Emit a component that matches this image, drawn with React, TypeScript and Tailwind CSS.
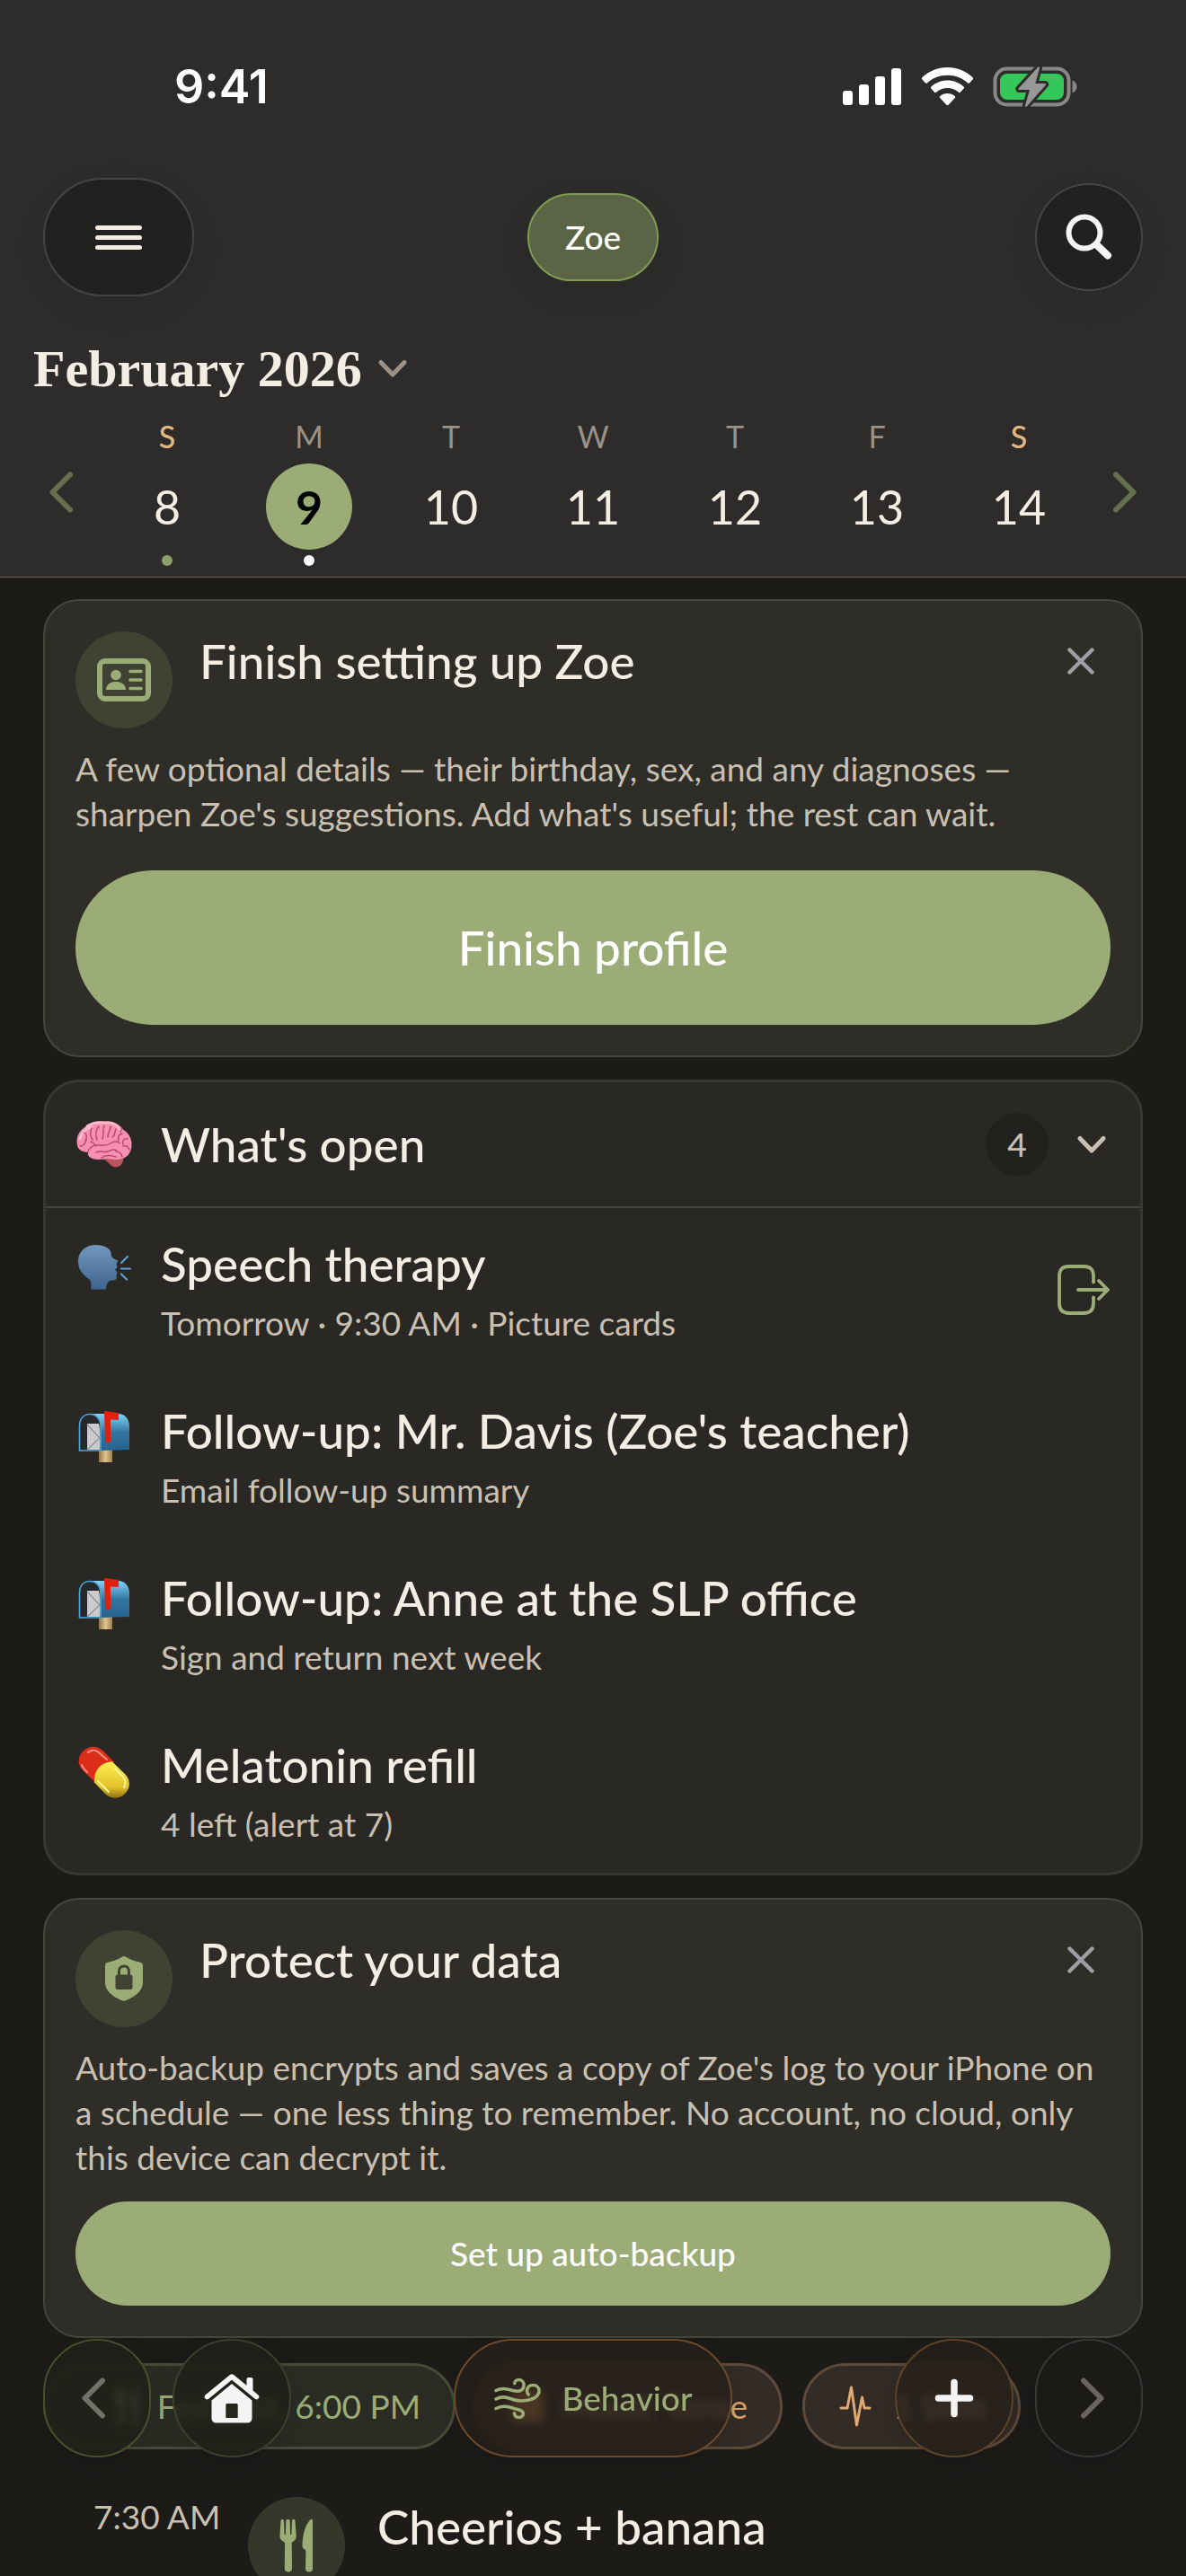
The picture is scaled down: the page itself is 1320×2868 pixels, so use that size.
import type { ReactNode } from "react";

const weekDays = [
  { letter: "S", day: 8, weekend: true, dot: true },
  { letter: "M", day: 9, selected: true, dot: true },
  { letter: "T", day: 10 },
  { letter: "W", day: 11 },
  { letter: "T", day: 12 },
  { letter: "F", day: 13 },
  { letter: "S", day: 14, weekend: true },
];

const openItems = [
  {
    title: "Speech therapy",
    detail: "Tomorrow · 9:30 AM · Picture cards",
    icon: <SpeakingHead />,
    action: true,
  },
  {
    title: "Follow-up: Mr. Davis (Zoe's teacher)",
    detail: "Email follow-up summary",
    icon: <Mailbox />,
  },
  {
    title: "Follow-up: Anne at the SLP office",
    detail: "Sign and return next week",
    icon: <Mailbox />,
  },
  {
    title: "Melatonin refill",
    detail: "4 left (alert at 7)",
    icon: <Pill />,
  },
];

/* Icons */

function Chevron({ dir, className }: { dir: "left" | "right"; className: string }) {
  return (
    <svg viewBox="0 0 28 46" fill="none" className={className} aria-hidden="true">
      <path
        d={dir === "left" ? "M24 3.5 4.5 23 24 42.5" : "M4 3.5 23.500 23 4 42.5"}
        stroke="currentColor"
        strokeWidth="6"
        strokeLinecap="round"
        strokeLinejoin="round"
      />
    </svg>
  );
}

function ChevronDown({ className }: { className: string }) {
  return (
    <svg viewBox="0 0 32 20" fill="none" className={className} aria-hidden="true">
      <path
        d="M3 3.500 16 17 29 3.500"
        stroke="currentColor"
        strokeWidth="5"
        strokeLinecap="round"
        strokeLinejoin="round"
      />
    </svg>
  );
}

function CloseIcon() {
  return (
    <svg viewBox="0 0 30 30" fill="none" className="size-[30px]" aria-hidden="true">
      <path d="M2.500 2.500 27.500 27.500M27.500 2.500 2.500 27.500" stroke="currentColor" strokeWidth="4.400" strokeLinecap="round" />
    </svg>
  );
}

function StatusIcons() {
  return (
    <svg viewBox="0 0 262 48" fill="none" className="h-12 w-[262px]" aria-hidden="true">
      <g fill="#fff">
        <rect x="0" y="28" width="11" height="16" rx="3" />
        <rect x="18" y="21" width="11" height="23" rx="3" />
        <rect x="36" y="12" width="11" height="32" rx="3" />
        <rect x="54" y="3" width="11" height="41" rx="3" />
        <path d="M116.500 2C105.500 2 95.600 6.300 88.300 13.300c-.6.600-.6 1.400-.1 2l3.600 4c.6.600 1.400.6 2 .1 6-5.500 14-8.700 22.700-8.700s16.700 3.200 22.700 8.700c.6.500 1.400.5 2-.1l3.600-4c.5-.6.500-1.400-.1-2C137.400 6.300 127.500 2 116.500 2z" />
        <path d="M116.500 16.500c-7 0-13.300 2.700-18.100 7-.6.600-.6 1.400-.1 2l3.800 4.200c.5.600 1.300.600 1.900.1 3.400-2.900 7.700-4.700 12.500-4.700s9.100 1.800 12.500 4.700c.6.500 1.400.5 1.900-.1l3.800-4.200c.5-.6.500-1.400-.1-2-4.800-4.300-11.100-7-18.100-7z" />
        <path d="M116.500 31c-3.100 0-6 1.100-8.200 3-.7.600-.7 1.400-.1 2l7 7.600c.7.700 1.900.7 2.600 0l7-7.600c.6-.6.600-1.400-.1-2-2.200-1.900-5.100-3-8.200-3z" />
      </g>
      <rect x="169.500" y="3.500" width="82" height="40" rx="13" stroke="#888887" strokeWidth="4" />
      <path d="M255.500 16.500c3 1 5 4 5 7s-2 6-5 7z" fill="#888887" />
      <rect x="175" y="9" width="71" height="29" rx="8" fill="#34c759" />
      <path
        d="M217 2 195.500 25.500c-.5.600-.1 1.500.7 1.500h11.800L203 44.500c-.3 1.200 1 1.900 1.800 1L226 21.500c.6-.6.100-1.500-.7-1.500h-11l4.700-17c.3-1.300-1.100-2-2-1z"
        fill="#979796"
        stroke="#2d2c2b"
        strokeWidth="6"
        paintOrder="stroke"
      />
    </svg>
  );
}

function SearchIcon() {
  return (
    <svg viewBox="0 0 54 54" fill="none" className="size-[54px]" aria-hidden="true">
      <circle cx="22" cy="22" r="17.500" stroke="#f4f4f4" strokeWidth="6" />
      <path d="m36 36 12 11.500" stroke="#f4f4f4" strokeWidth="8" strokeLinecap="round" />
    </svg>
  );
}

function IdCardIcon() {
  return (
    <svg viewBox="0 0 60 48" fill="none" className="h-12 w-[60px]" aria-hidden="true">
      <rect x="3" y="3" width="54" height="42" rx="6" stroke="#9cac77" strokeWidth="6" />
      <circle cx="21" cy="18.500" r="5.800" fill="#9cac77" />
      <path d="M10 35c0-5.500 4.500-9 11-9s11 3.500 11 9z" fill="#9cac77" />
      <path d="M37 14.500h12M37 24h12M37 33.500h12" stroke="#9cac77" strokeWidth="3.600" strokeLinecap="round" />
    </svg>
  );
}

function ShieldLockIcon() {
  return (
    <svg viewBox="0 0 42 52" fill="none" className="h-[52px] w-[42px]" aria-hidden="true">
      <path
        d="M21 1c1.500 0 3 1.300 5 2.300 4 2 8.500 3.500 13 4.500 1.800.4 3 1.700 3 3.500v19C42 41 30 48 21 51 12 48 0 41 0 30.300v-19c0-1.800 1.200-3.100 3-3.500 4.500-1 9-2.500 13-4.500C18 2.300 19.500 1 21 1z"
        fill="#9cac77"
      />
      <rect x="11.500" y="21.500" width="19" height="16.500" rx="2.500" fill="#404333" />
      <path d="M15.500 22v-4.500c0-3.300 2.300-5.500 5.500-5.500s5.500 2.200 5.500 5.500V22" stroke="#404333" strokeWidth="3" />
    </svg>
  );
}

function ExitIcon() {
  return (
    <svg viewBox="0 0 58 56" fill="none" className="h-14 w-[58px]" aria-hidden="true">
      <path
        d="M40 19.500V13C40 5.500 36.500 2 29 2H13C5.500 2 2 5.500 2 13v30c0 7.500 3.500 11 11 11h16c7.500 0 11-3.500 11-11v-6.500M23 28h32M46 18l10 10-10 10"
        stroke="#9cac77"
        strokeWidth="3.800"
        strokeLinecap="round"
        strokeLinejoin="round"
      />
    </svg>
  );
}

function ForkKnife({ className }: { className: string }) {
  return (
    <svg viewBox="0 0 38 60" fill="currentColor" className={className} aria-hidden="true">
      <path d="M1.500 2.200c.1-1.600 3.300-1.600 3.400 0l.7 15.600h1.300L7.300 2.200c.1-1.600 4.300-1.600 4.400 0l.4 15.600h1.300l.7-15.600c.1-1.600 3.300-1.600 3.400 0L18.700 19c.3 4-1.400 5.800-5 7.700L14 56c0 4.500-8.200 4.500-8.200 0l.3-29.300C2.500 24.800.3 23 .5 19z" />
      <path d="M37 2.500V56c0 4.500-8 4.500-8 0l.4-20c0-1.500-3.900-2.500-3.900-5 0-12 3-23.500 8.700-29.500C35.600.2 37 .8 37 2.500z" />
    </svg>
  );
}

function PulseIcon() {
  return (
    <svg viewBox="0 0 36 46" fill="none" className="h-[46px] w-9 shrink-0" aria-hidden="true">
      <path
        d="M2 25h7l4.500-23L19.500 44 25.500 13l2.500 12h6"
        stroke="currentColor"
        strokeWidth="3"
        strokeLinecap="round"
        strokeLinejoin="round"
      />
    </svg>
  );
}

function WindIcon() {
  return (
    <svg viewBox="0 0 52 46" fill="none" className="h-[46px] w-[52px] shrink-0" aria-hidden="true">
      <g stroke="#9cac77" strokeWidth="3.600" strokeLinecap="round">
        <path d="M2 14.500c8-4 14-1 20 .3 7 1.500 11-1 11-6.300 0-3.500-2.500-6-5.500-6-2.600 0-4.700 1.700-4.700 4.200" />
        <path d="M2 24c9-5 15 0 23 1.500 6 1 11.500.500 17-1.500 5-1.900 8-5.500 8-9 0-4-2.800-6.500-6.700-6.500-4 0-6.800 2.700-6.800 6.500 0 1.600.6 3 1.700 4" />
        <path d="M2 34.500c8-4 14-2 21 .3 5.500 1.500 9 2 9.300 5 .2 3-2 4.700-4.800 4.700-3 0-5-2-5-4.700" />
      </g>
    </svg>
  );
}

function HomeIcon() {
  return (
    <svg viewBox="0 0 62 56" className="h-14 w-[62px]" aria-hidden="true">
      <path d="M3.500 26.500 31 4l27.500 22.500" fill="none" stroke="#f4f4f4" strokeWidth="5.500" strokeLinecap="round" strokeLinejoin="round" />
      <path d="M47.500 7c0-1.200.8-2 2-2h3c1.200 0 2 .8 2 2v15l-7-5.500z" fill="#f4f4f4" />
      <path
        d="M31 12 8.500 30.500V50c0 3.500 2 5.500 5.500 5.500h34c3.500 0 5.500-2 5.500-5.500V30.500zM26 34h10c1 0 1.700.7 1.700 1.700V50H24.300V35.700c0-1 .7-1.700 1.700-1.700z"
        fill="#f4f4f4"
        fillRule="evenodd"
      />
    </svg>
  );
}

function Brain() {
  return (
    <svg viewBox="0 0 62 52" fill="none" className="h-[52px] w-[62px] shrink-0" aria-hidden="true">
      <path d="M26 42c6 0 9 4 12 7 4 4 11 2.500 13-2 1.500-3.300 1.500-6 1-9z" fill="#b8545f" />
      <path
        d="M1 27C-1 17 4 10 11 6 17 1 26-.5 34 1c8-1 15 4 18.500 9C58 13 62 20 61.500 27c0 7-4 13-10 15-7 2.500-14-.5-20 0-6 1.500-13 1.500-17-2-2-2-2-4-1-5-6 0-12-3-12.500-8z"
        fill="#f78fb0"
      />
      <path
        d="M4 20c2-8 7-12 13-13M12 6c5-4 12-5 20-4 8-1 14 3 17 8"
        stroke="#ffb9cd"
        strokeWidth="3"
        strokeLinecap="round"
      />
      <path
        d="M13 34c2-6 8-8 14-7s10-1 13-3 7-1 8 1M4 28c4 0 6-3 7-7M9 13c3 2 3 6 1 9M17 8c-2 5-2 9 1 13M25 6c-4 5-4 9-2 15M31 5c-2 6 0 9-2 15M38 6c0 5-3 6-3 12M44 9c-2 3 0 7-4 9M51 14c-4 1-5 4-4 8M57 20c-4-1-6 2-5 6M52 28c4-1 6 1 7 4M22 35c5-3 8 1 13-1s6-3 10-1M28 41c4-3 10-3 16-1M44 34c4 0 6 2 7 6M16 23c3 1 4 2 6 5M50 8c1 2 0 3-1 4"
        stroke="#b84a70"
        strokeWidth="1.500"
        strokeLinecap="round"
      />
    </svg>
  );
}

function SpeakingHead() {
  return (
    <svg viewBox="0 0 60 52" fill="none" className="h-[52px] w-[60px] shrink-0" aria-hidden="true">
      <defs>
        <linearGradient id="head" x1="0" y1="0" x2="0" y2="1">
          <stop offset="0" stopColor="#7296bc" />
          <stop offset="1" stopColor="#3f648f" />
        </linearGradient>
      </defs>
      <path
        d="M21 1C9 1 1 8.500 1 19c0 8 3 12.500 8 17 5 4 8 5 6 14.500h17c.5-7 2.500-10 7-10 4 0 5.500-1.500 4.500-5.500l1-4-2.500-2 2.500-3-1-3.500 2-4c-5.500-2-8-3-8-9C37 5.500 30.500 1 21 1z"
        fill="url(#head)"
      />
      <path d="m49 21 7-7M49 27.500h10M49 33.500l6 6" stroke="#5f9dd0" strokeWidth="2.200" strokeLinecap="round" />
    </svg>
  );
}

function Mailbox() {
  return (
    <svg viewBox="0 0 60 58" fill="none" className="h-[58px] w-[60px] shrink-0" aria-hidden="true">
      <defs>
        <linearGradient id="box" x1="0" y1="0" x2="0" y2="1">
          <stop offset="0" stopColor="#7fd4fb" />
          <stop offset=".5" stopColor="#34759f" />
          <stop offset="1" stopColor="#25638d" />
        </linearGradient>
        <linearGradient id="post" x1="0" y1="0" x2="1" y2="0">
          <stop offset="0" stopColor="#8f7544" />
          <stop offset=".5" stopColor="#e0c48f" />
          <stop offset="1" stopColor="#9c814e" />
        </linearGradient>
      </defs>
      <rect x="24" y="42" width="15" height="15" fill="url(#post)" />
      <path d="M14 3h31c8 0 13 6 13 14v26l-31 1z" fill="url(#box)" />
      <path d="M2.500 44V17C2.500 8.500 7 3.500 14 3.500S26 9 26 17v27z" fill="#26282a" stroke="#4ea4d6" strokeWidth="1.600" />
      <path d="M11 14h13c1.500 4 1.500 24 1 29H11z" fill="#c9cbcd" />
      <path d="m11 15 14 15-14 13" stroke="#909396" strokeWidth="1.300" />
      <path d="M30 1.500c0-.8.500-1.500 1.500-1.500L46 2v8l-9-.5V32c0 4.500-6 4.500-6 0z" fill="#e3200c" />
    </svg>
  );
}

function Pill() {
  return (
    <svg viewBox="0 0 60 60" fill="none" className="size-[60px] shrink-0" aria-hidden="true">
      <defs>
        <linearGradient id="yellow" x1="0" y1="0" x2="0" y2="1">
          <stop offset="0" stopColor="#fdf04f" />
          <stop offset=".7" stopColor="#e2c22b" />
          <stop offset="1" stopColor="#8f6f10" />
        </linearGradient>
      </defs>
      <path d="M6.500 6.500c6.500-6.500 16-6.500 22.500 0l12 12L19.500 41l-13-12.500c-6.500-6.500-6.500-15.500 0-22z" fill="#dc2d18" />
      <path d="M39 18.500 53 32c6.500 6.500 6.500 15.500 0 22s-15.500 6.500-22 0L19 41.500C18 29 26 18.500 39 18.500z" fill="url(#yellow)" />
      <path d="M12 8c4-3 9-3 13 1l8 7M5 22c1 3 3 5 6 8" stroke="#f98d7c" strokeWidth="2.200" strokeLinecap="round" />
      <path d="M23 40l12 12M42 26l9 9c3 4 3 8 1 12" stroke="#fff7a0" strokeWidth="1.800" strokeLinecap="round" />
    </svg>
  );
}

/* Pieces */

function SetupCard({
  icon,
  title,
  children,
  button,
}: {
  icon: ReactNode;
  title: string;
  children: ReactNode;
  button: ReactNode;
}) {
  return (
    <section className="rounded-[40px] border-2 border-[#44473a] bg-[#2e2d28] p-[34px]">
      <div className="flex items-start gap-[30px]">
        <div className="flex size-[108px] shrink-0 items-center justify-center rounded-full bg-[#404333]">
          {icon}
        </div>
        <h2 className="flex-1 text-[53px] leading-[66px] font-medium">{title}</h2>
        <button aria-label={"Dismiss " + title} className="flex size-[66px] items-center justify-center text-[#9f9ea4]">
          <CloseIcon />
        </button>
      </div>
      <p className="mt-5 text-[37px] leading-[50px] text-[#c9c0b1]">{children}</p>
      {button}
    </section>
  );
}

function Glass({ label, className, children }: { label?: string; className: string; children: ReactNode }) {
  return (
    <button
      aria-label={label}
      className={
        "flex h-[132px] items-center justify-center rounded-full border-2 shadow-[0_12px_32px_rgba(0,0,0,0.12)] backdrop-blur-[5px] " +
        className
      }
    >
      {children}
    </button>
  );
}

export default function App() {
  return (
    <div className="relative flex h-screen flex-col overflow-hidden bg-[#1d1b18] font-['Lato','Open_Sans',sans-serif] text-[#f3ede4]">
      <header className="border-b border-[#66645c] bg-[#2d2c2b] pb-3">
        <div className="flex h-[194px] items-center justify-between pr-[120px] pl-[194px] text-white">
          <span className="font-['Inter',sans-serif] text-[52px] font-semibold">9:41</span>
          <StatusIcons />
        </div>

        <div className="grid h-[140px] grid-cols-3 items-center px-12">
          <button
            aria-label="Menu"
            className="flex h-[132px] w-[168px] flex-col items-center justify-center gap-[6px] rounded-[66px] border-2 border-[#454443] bg-[#212120] shadow-[0_12px_40px_rgba(0,0,0,0.06)]"
          >
            <span className="h-[5px] w-[52px] rounded-full bg-[#f3ede4]" />
            <span className="h-[5px] w-[52px] rounded-full bg-[#f3ede4]" />
            <span className="h-[5px] w-[52px] rounded-full bg-[#f3ede4]" />
          </button>
          <button className="flex h-[98px] w-[146px] items-center justify-center justify-self-center rounded-full border-2 border-[#7f9a52] bg-[#5b6546] text-[37px] font-medium text-white shadow-[0_12px_40px_rgba(0,0,0,0.06)]">
            Zoe
          </button>
          <button
            aria-label="Search"
            className="flex size-[120px] items-center justify-center justify-self-end rounded-full border-2 border-[#454443] bg-[#212120] shadow-[0_12px_40px_rgba(0,0,0,0.06)]"
          >
            <SearchIcon />
          </button>
        </div>

        <button className="mt-[44px] ml-[37px] flex h-16 items-center gap-[18px] font-['Liberation_Serif',serif] text-[58px] font-bold">
          February 2026
          <ChevronDown className="h-5 w-8 text-[#9b9187]" />
        </button>

        <div className="mt-6 flex items-center px-[54px]">
          <button aria-label="Previous week" className="w-[53px] text-[#66704f]">
            <Chevron dir="left" className="h-[46px] w-7" />
          </button>
          <div className="grid flex-1 grid-cols-7">
            {weekDays.map((d) => (
              <button key={d.day} className="flex flex-col items-center">
                <span
                  className={
                    "text-[34px] leading-[40px] " +
                    (d.weekend ? "font-medium text-[#e3b882]" : "text-[#9b9187]")
                  }
                >
                  {d.letter}
                </span>
                <span
                  className={
                    "mt-[10px] flex size-24 items-center justify-center rounded-full text-[52px] " +
                    (d.selected ? "bg-[#9cac77] font-bold text-black" : "")
                  }
                >
                  {d.day}
                </span>
                <span
                  className={
                    "mt-[6px] size-3 rounded-full " +
                    (d.dot ? (d.selected ? "bg-white" : "bg-[#8f9f6c]") : "")
                  }
                />
              </button>
            ))}
          </div>
          <button aria-label="Next week" className="flex w-[53px] justify-end text-[#66704f]">
            <Chevron dir="right" className="h-[46px] w-7" />
          </button>
        </div>
      </header>

      <main className="flex-1 overflow-hidden px-12 pt-6">
        <div className="flex flex-col gap-[25px]">
          <SetupCard
            icon={<IdCardIcon />}
            title="Finish setting up Zoe"
            button={
              <button className="mt-[38px] h-[172px] w-full rounded-full bg-[#9cac77] text-[53px] font-medium text-white">
                Finish profile
              </button>
            }
          >
            A few optional details — their birthday, sex, and any diagnoses — sharpen Zoe's
            suggestions. Add what's useful; the rest can wait.
          </SetupCard>

          <section className="rounded-[40px] border-[3px] border-[#383730] bg-[#292824]">
            <button className="flex h-[140px] w-full items-center border-b-2 border-[#45443f] px-[34px] text-left">
              <Brain />
              <span className="ml-8 flex-1 text-[53px] leading-[66px] font-medium">What's open</span>
              <span className="flex size-[70px] items-center justify-center rounded-full bg-[#22211e] text-[37px] font-medium text-[#c9c0b1]">
                4
              </span>
              <ChevronDown className="mr-1 ml-8 h-5 w-8 text-[#c9c0b1]" />
            </button>
            <ul className="-mb-1">
              {openItems.map((item) => (
                <li key={item.title} className="flex h-[186px] items-center px-[34px] pb-1">
                  <div className="flex w-[62px] justify-center self-start pt-10">{item.icon}</div>
                  <div className="ml-8 flex-1">
                    <h3 className="text-[53px] leading-[66px] font-medium">{item.title}</h3>
                    <p className="mt-2 text-[37px] leading-[50px] text-[#c9c0b1]">{item.detail}</p>
                  </div>
                  {item.action && (
                    <button aria-label={"Open " + item.title}>
                      <ExitIcon />
                    </button>
                  )}
                </li>
              ))}
            </ul>
          </section>

          <SetupCard
            icon={<ShieldLockIcon />}
            title="Protect your data"
            button={
              <button className="mt-6 h-[116px] w-full rounded-full bg-[#9cac77] text-[37px] font-medium text-white">
                Set up auto-backup
              </button>
            }
          >
            Auto-backup encrypts and saves a copy of Zoe's log to your iPhone on a schedule — one
            less thing to remember. No account, no cloud, only this device can decrypt it.
          </SetupCard>
        </div>

        <div className="mt-[28px] flex gap-[22px] text-[37px] whitespace-nowrap">
          <div className="flex h-24 w-[459px] items-center justify-end gap-5 rounded-full border-[3px] border-[#474b37] bg-[#2b2c24] pr-[36px] text-[#9cac77]">
            <ForkKnife className="h-[44px] w-7" />
            Fed yest. 6:00 PM
          </div>
          <div className="flex h-24 w-[342px] items-center justify-end gap-5 rounded-full border-[3px] border-[#5e4a3a] bg-[#332b25] pr-[36px] text-[#d9a26b]">
            <span className="size-9 rounded-lg bg-[#d98b3f]" />
            Mood: Tense
          </div>
          <div className="flex h-24 w-[243px] items-center gap-6 rounded-full border-[3px] border-[#5e4a3a] bg-[#332b25] pl-[38px] text-[#e0a973]">
            <PulseIcon />
            1 Stim
          </div>
        </div>

        <div className="mt-[53px] flex items-start pl-14 whitespace-nowrap">
          <time className="w-[132px] text-[37px] leading-[44px] text-[#c9c0b1]">7:30 AM</time>
          <div className="ml-10 flex size-[108px] shrink-0 items-center justify-center rounded-full bg-[#35372a] text-[#9cac77]">
            <ForkKnife className="h-[60px] w-[38px]" />
          </div>
          <h3 className="ml-9 text-[53px] leading-[66px] font-medium">Cheerios + banana</h3>
        </div>
      </main>

      {/* Floating bar over the log */}
      <nav className="absolute inset-x-0 bottom-[132px] flex items-center justify-between px-12">
        <div className="flex gap-6">
          <Glass label="Previous" className="w-[120px] border-[#46502c] bg-[#1f2019]/85 pr-2 text-[#71716a]">
            <Chevron dir="left" className="h-[46px] w-7" />
          </Glass>
          <Glass label="Home" className="w-[132px] border-[#3c3f2d] bg-[#1f2019]/85">
            <HomeIcon />
          </Glass>
        </div>
        <Glass className="w-[310px] gap-6 border-[#6b4a2c] bg-[#251f1a]/80 text-[37px] font-medium text-[#9cac77]">
          <WindIcon />
          Behavior
        </Glass>
        <div className="flex gap-6">
          <Glass label="Add" className="w-[132px] border-[#5c4329] bg-[#251f1a]/80">
            <svg viewBox="0 0 44 44" className="size-11" aria-hidden="true">
              <path d="M22 4.500v35M4.500 22h35" stroke="#f4f4f4" strokeWidth="7.500" strokeLinecap="round" />
            </svg>
          </Glass>
          <Glass label="Next" className="w-[120px] border-[#383734] bg-[#1b1a18]/85 pl-2 text-[#686560]">
            <Chevron dir="right" className="h-[46px] w-7" />
          </Glass>
        </div>
      </nav>
    </div>
  );
}
